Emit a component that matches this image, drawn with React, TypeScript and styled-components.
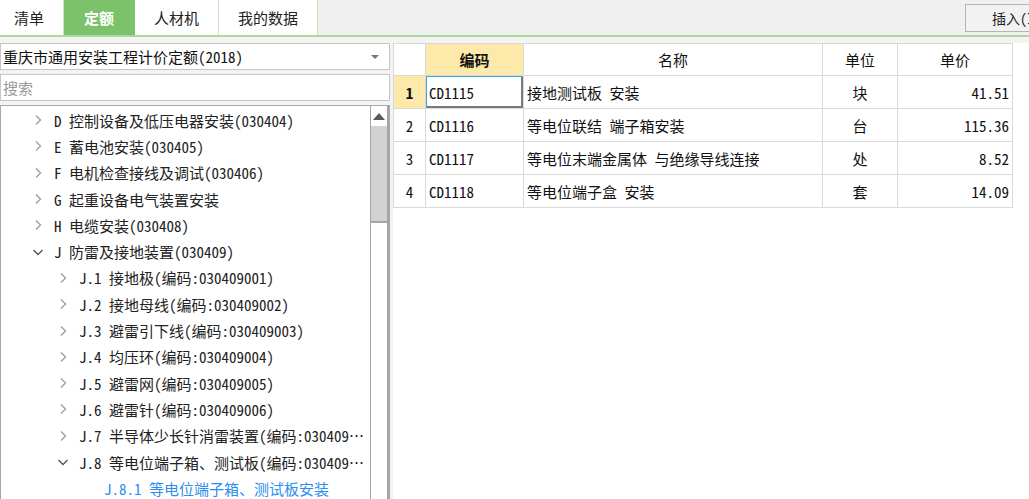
import React from 'react';
import styled, { createGlobalStyle, css } from 'styled-components';

const GlobalStyle = createGlobalStyle`
  html, body {
    margin: 0;
    padding: 0;
    overflow: hidden;
    background: #ffffff;
  }
  * {
    box-sizing: border-box;
  }
`;

const MONO = `"Noto Sans Mono CJK SC", "Noto Sans CJK SC", "Liberation Mono", monospace`;
const SANS = `"Noto Sans CJK SC", "Noto Sans", sans-serif`;

type TreeNode = {
  level: number;
  text: string;
  state: 'closed' | 'open' | 'leaf';
  active?: boolean;
};

const treeNodes: TreeNode[] = [
  { level: 1, text: 'D 控制设备及低压电器安装(030404)', state: 'closed' },
  { level: 1, text: 'E 蓄电池安装(030405)', state: 'closed' },
  { level: 1, text: 'F 电机检查接线及调试(030406)', state: 'closed' },
  { level: 1, text: 'G 起重设备电气装置安装', state: 'closed' },
  { level: 1, text: 'H 电缆安装(030408)', state: 'closed' },
  { level: 1, text: 'J 防雷及接地装置(030409)', state: 'open' },
  { level: 2, text: 'J.1 接地极(编码:030409001)', state: 'closed' },
  { level: 2, text: 'J.2 接地母线(编码:030409002)', state: 'closed' },
  { level: 2, text: 'J.3 避雷引下线(编码:030409003)', state: 'closed' },
  { level: 2, text: 'J.4 均压环(编码:030409004)', state: 'closed' },
  { level: 2, text: 'J.5 避雷网(编码:030409005)', state: 'closed' },
  { level: 2, text: 'J.6 避雷针(编码:030409006)', state: 'closed' },
  { level: 2, text: 'J.7 半导体少长针消雷装置(编码:030409007)', state: 'closed' },
  { level: 2, text: 'J.8 等电位端子箱、测试板(编码:030409008)', state: 'open' },
  { level: 3, text: 'J.8.1 等电位端子箱、测试板安装', state: 'leaf', active: true },
];

type Row = { no: number; code: string; name: string; unit: string; price: string };

const rows: Row[] = [
  { no: 1, code: 'CD1115', name: '接地测试板 安装', unit: '块', price: '41.51' },
  { no: 2, code: 'CD1116', name: '等电位联结 端子箱安装', unit: '台', price: '115.36' },
  { no: 3, code: 'CD1117', name: '等电位末端金属体 与绝缘导线连接', unit: '处', price: '8.52' },
  { no: 4, code: 'CD1118', name: '等电位端子盒 安装', unit: '套', price: '14.09' },
];

const tabs = ['清单', '定额', '人材机', '我的数据'];

const Chevron = ({ open }: { open: boolean }) =>
  open ? (
    <svg width="12" height="12" viewBox="0 0 12 12">
      <polyline points="1.5,4 6,8.5 10.5,4" fill="none" stroke="#555" strokeWidth="1.4" />
    </svg>
  ) : (
    <svg width="12" height="12" viewBox="0 0 12 12">
      <polyline points="4,1.5 8.5,6 4,10.5" fill="none" stroke="#a0a0a0" strokeWidth="1.4" />
    </svg>
  );

export default function App() {
  return (
    <Page>
      <GlobalStyle />
      <TopBar>
        <Tabs>
          {tabs.map((t, i) => (
            <Tab key={t} $active={i === 1} $first={i === 0}>
              {t}
            </Tab>
          ))}
        </Tabs>
        <InsertButton>插入(I)</InsertButton>
      </TopBar>
      <Main>
        <LeftPanel>
          <Combo>
            <ComboText>重庆市通用安装工程计价定额(2018)</ComboText>
            <Caret />
          </Combo>
          <SearchBox placeholder="搜索" />
          <TreePanel>
            <TreeList>
              {treeNodes.map((n) => (
                <TreeRow key={n.text} $level={n.level}>
                  <ChevronBox>{n.state !== 'leaf' && <Chevron open={n.state === 'open'} />}</ChevronBox>
                  <TreeLabel $active={n.active}>{n.text}</TreeLabel>
                </TreeRow>
              ))}
            </TreeList>
            <ScrollBar>
              <ScrollUp>
                <svg width="12" height="7" viewBox="0 0 12 7">
                  <polygon points="0,7 6,0 12,7" fill="#5a5a5a" />
                </svg>
              </ScrollUp>
              <ScrollThumb />
            </ScrollBar>
          </TreePanel>
        </LeftPanel>
        <RightPanel>
          <Grid>
            <colgroup>
              <col style={{ width: 32 }} />
              <col style={{ width: 98 }} />
              <col style={{ width: 299 }} />
              <col style={{ width: 75 }} />
              <col style={{ width: 115 }} />
            </colgroup>
            <thead>
              <tr>
                <HeadCell />
                <HeadCell $highlight>编码</HeadCell>
                <HeadCell>名称</HeadCell>
                <HeadCell>单位</HeadCell>
                <HeadCell>单价</HeadCell>
              </tr>
            </thead>
            <tbody>
              {rows.map((r) => (
                <tr key={r.code}>
                  <NoCell $current={r.no === 1}>{r.no}</NoCell>
                  <Cell $selected={r.no === 1}>{r.code}</Cell>
                  <Cell>{r.name}</Cell>
                  <Cell $align="center">{r.unit}</Cell>
                  <Cell $align="right">{r.price}</Cell>
                </tr>
              ))}
            </tbody>
          </Grid>
        </RightPanel>
      </Main>
    </Page>
  );
}

const Page = styled.div`
  width: 100vw;
  height: 100vh;
  display: flex;
  flex-direction: column;
  background: #f3f3f3;
  font-family: ${SANS};
  color: #222;
`;

const TopBar = styled.div`
  height: 37px;
  flex: none;
  display: flex;
  justify-content: space-between;
  align-items: flex-start;
  background: #f0f0f0;
  border-bottom: 2px solid #a9d99b;
`;

const Tabs = styled.div`
  display: flex;
  height: 35px;
`;

const Tab = styled.div<{ $active?: boolean; $first?: boolean }>`
  height: 35px;
  padding: 0 19px 0 ${(p) => (p.$first ? 14 : 19)}px;
  display: flex;
  align-items: center;
  font-size: 15px;
  background: #ffffff;
  border-right: 1px solid #c8e6bd;
  color: #222;
  ${(p) =>
    p.$active &&
    css`
      background: #7bc26a;
      color: #ffffff;
      font-weight: 700;
      padding: 0 20px;
      border-right-color: #7bc26a;
    `}
`;

const InsertButton = styled.button`
  margin-top: 4px;
  margin-right: -26px;
  width: 90px;
  height: 28px;
  padding: 0 0 0 26px;
  text-align: left;
  font-family: ${MONO};
  font-size: 14px;
  color: #222;
  background: #f2f2f2;
  border: 1px solid #b4b4b4;
`;

const Main = styled.div`
  flex: 1;
  min-height: 0;
  display: flex;
  gap: 3px;
  padding-top: 6px;
`;

const LeftPanel = styled.div`
  width: 390px;
  flex: none;
  display: flex;
  flex-direction: column;
  gap: 4px;
`;

const Combo = styled.div`
  height: 27px;
  flex: none;
  display: flex;
  align-items: center;
  justify-content: space-between;
  padding: 0 10px 0 2px;
  background: #ffffff;
  border: 1px solid #c6c6c6;
`;

const ComboText = styled.span`
  font-family: ${MONO};
  font-size: 15px;
  color: #111;
`;

const Caret = styled.span`
  width: 0;
  height: 0;
  border-left: 4px solid transparent;
  border-right: 4px solid transparent;
  border-top: 4px solid #777;
`;

const SearchBox = styled.input`
  height: 27px;
  flex: none;
  padding: 0 2px;
  font-family: ${MONO};
  font-size: 15px;
  background: #ffffff;
  border: 1px solid #c6c6c6;
  outline: none;
  &::placeholder {
    color: #9a9a9a;
  }
`;

const TreePanel = styled.div`
  flex: 1;
  min-height: 0;
  display: flex;
  background: #ffffff;
  border: 1px solid #a8a8a8;
  border-bottom: none;
`;

const TreeList = styled.div`
  flex: 1;
  min-width: 0;
  padding-top: 1px;
  padding-right: 3px;
`;

const TreeRow = styled.div<{ $level: number }>`
  height: 26.3px;
  display: flex;
  align-items: center;
  padding-left: ${(p) => 31 + (p.$level - 1) * 25}px;
`;

const ChevronBox = styled.span`
  width: 22px;
  flex: none;
  display: flex;
  align-items: center;
`;

const TreeLabel = styled.span<{ $active?: boolean }>`
  font-family: ${MONO};
  font-size: 15px;
  white-space: pre;
  overflow: hidden;
  text-overflow: ellipsis;
  color: ${(p) => (p.$active ? '#2c8ff0' : '#222')};
`;

const ScrollBar = styled.div`
  width: 19px;
  flex: none;
  display: flex;
  flex-direction: column;
  border-left: 1px solid #a5a5a5;
  border-right: 2px solid #a5a5a5;
  background: #ffffff;
`;

const ScrollUp = styled.div`
  height: 19px;
  margin-top: 1px;
  display: flex;
  align-items: center;
  justify-content: center;
  background: #ffffff;
`;

const ScrollThumb = styled.div`
  height: 97px;
  background: #d2d2d2;
  border-bottom: 2px solid #a5a5a5;
`;

const RightPanel = styled.div`
  flex: 1;
  min-width: 0;
  background: #ffffff;
`;

const Grid = styled.table`
  border-collapse: collapse;
  table-layout: fixed;
  width: 619px;
  font-family: ${MONO};
  font-size: 15px;
  color: #111;
`;

const HeadCell = styled.th<{ $highlight?: boolean }>`
  height: 32px;
  padding: 0;
  border: 1px solid #d9d9d9;
  text-align: center;
  font-weight: ${(p) => (p.$highlight ? 700 : 400)};
  background: ${(p) => (p.$highlight ? '#fde9a9' : '#ffffff')};
`;

const NoCell = styled.td<{ $current?: boolean }>`
  height: 33px;
  padding: 0;
  border: 1px solid #d9d9d9;
  text-align: center;
  font-weight: ${(p) => (p.$current ? 700 : 400)};
  background: ${(p) => (p.$current ? '#fde9a9' : '#ffffff')};
`;

const Cell = styled.td<{ $align?: 'left' | 'center' | 'right'; $selected?: boolean }>`
  height: 33px;
  padding: 0 3px;
  border: 1px solid #d9d9d9;
  white-space: nowrap;
  overflow: hidden;
  text-align: ${(p) => p.$align ?? 'left'};
  ${(p) =>
    p.$selected &&
    css`
      box-shadow: inset 1px 1px 0 #3aa6dc, inset -2px -2px 0 #7a7a7a;
    `}
`;
